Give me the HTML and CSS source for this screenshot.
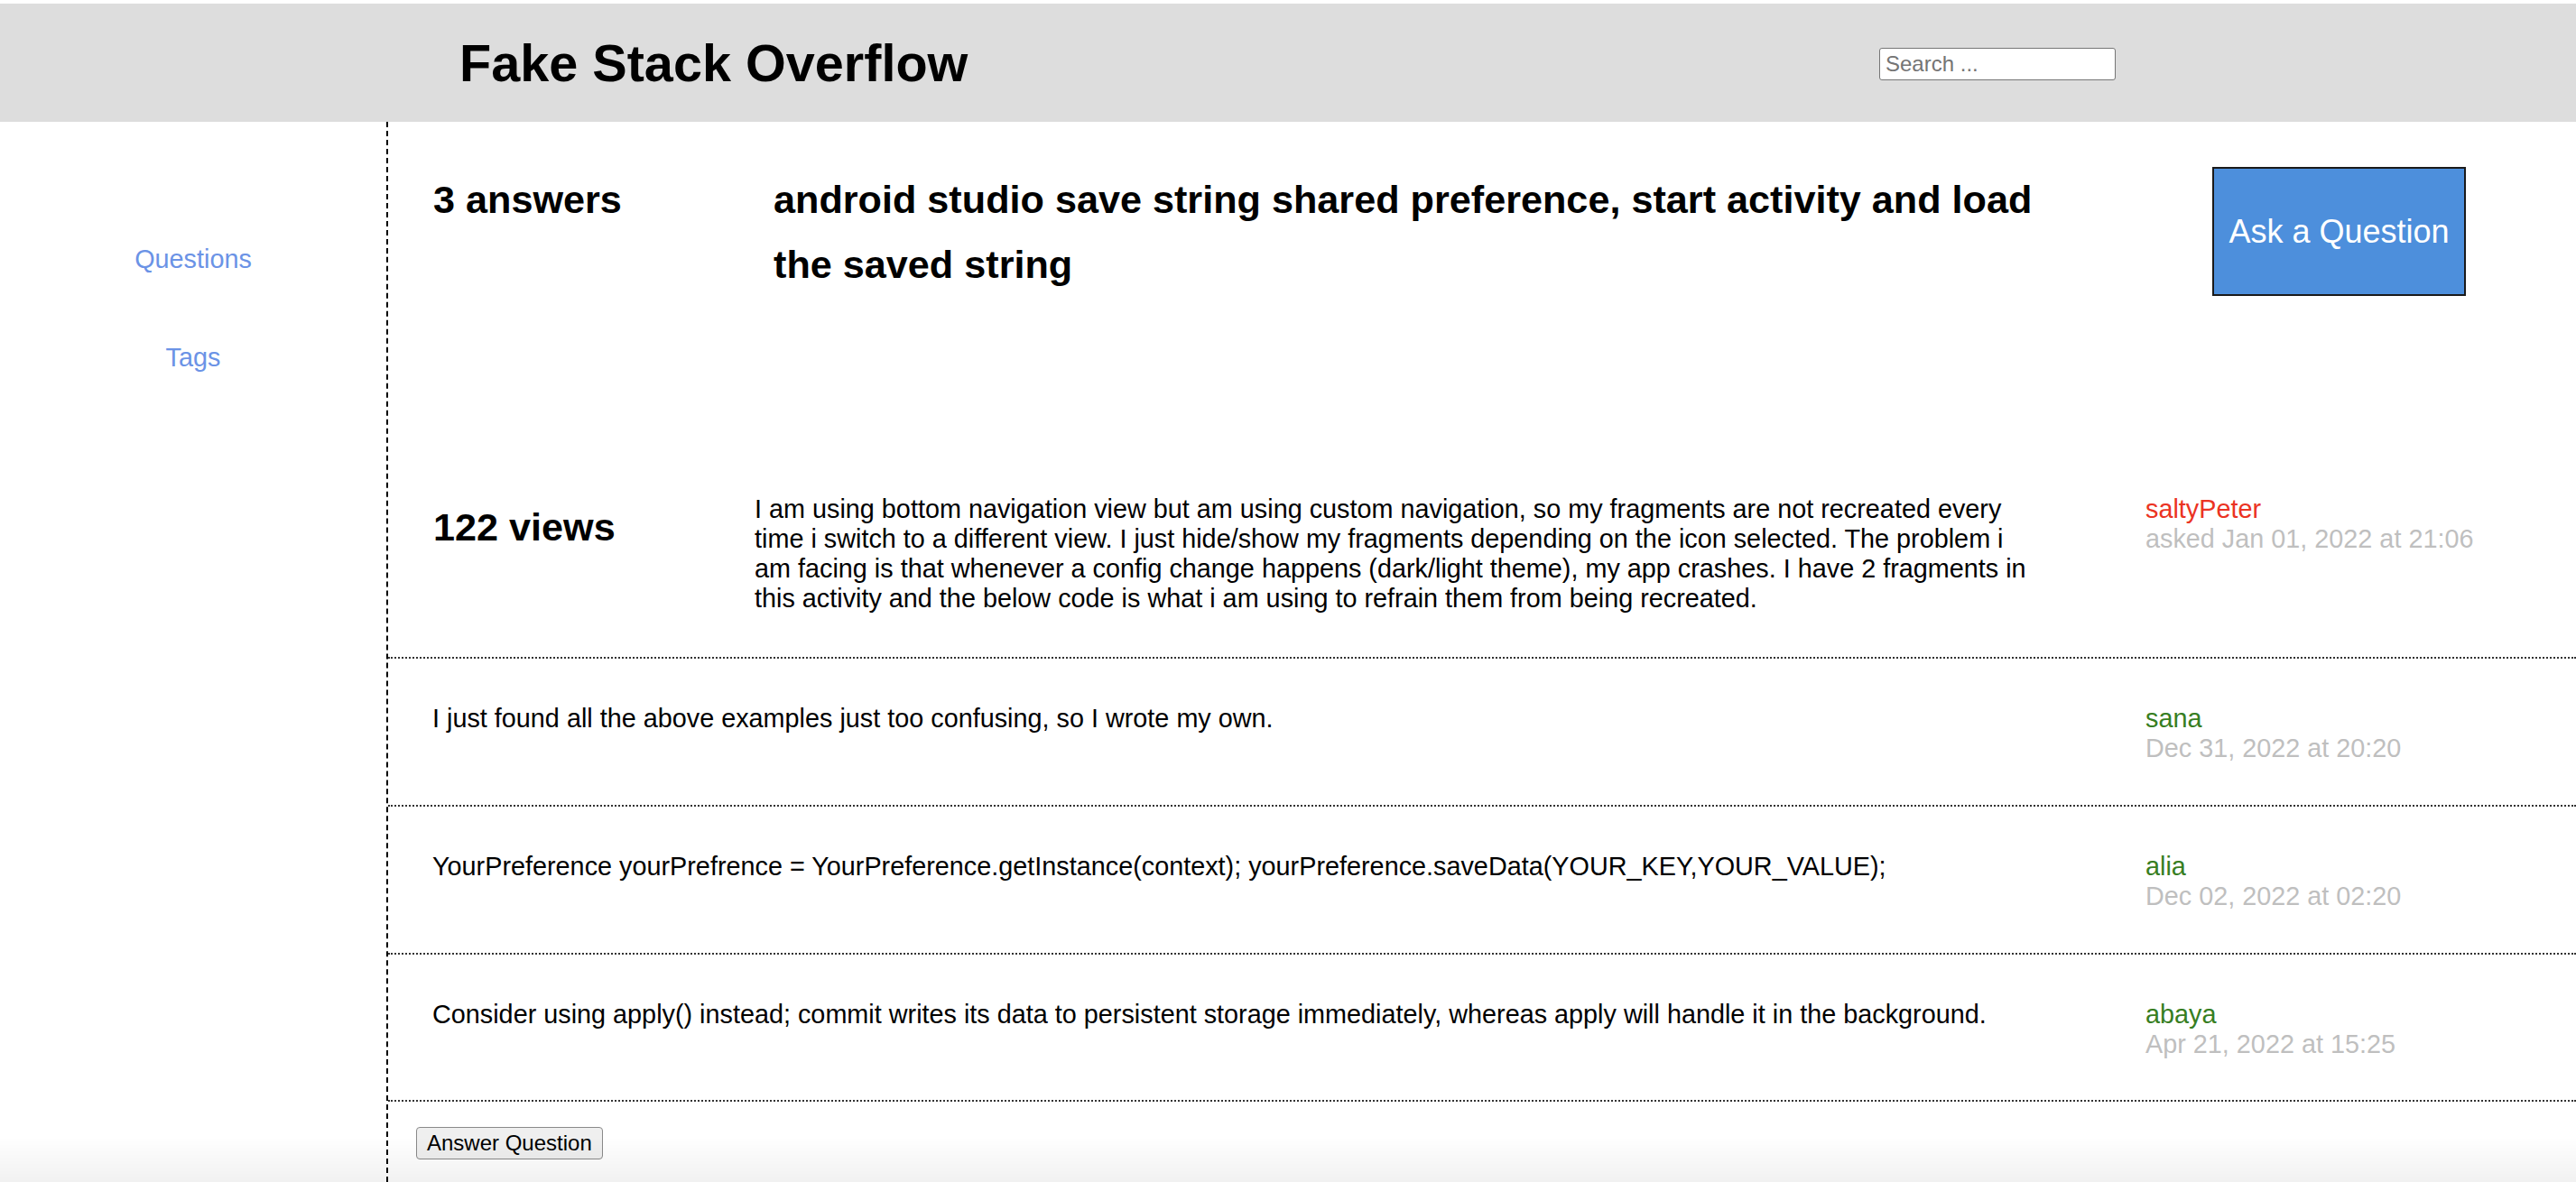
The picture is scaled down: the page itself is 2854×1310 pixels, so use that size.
FILE: index.html
```html
<!DOCTYPE html>
<html lang="en">
<head>
<meta charset="utf-8">
<title>Fake Stack Overflow</title>
<link rel="stylesheet" href="styles.css">
</head>
<body>
<header class="topbar">
  <h1 class="brand">Fake Stack Overflow</h1>
  <input class="search" type="text" placeholder="Search ...">
</header>
<div class="layout">
  <nav class="sidebar">
    <a class="nav-link" href="#">Questions</a>
    <a class="nav-link" href="#">Tags</a>
  </nav>
  <main class="content">
    <section class="q-header">
      <div class="answer-count">3 answers</div>
      <div class="q-title">android studio save string shared preference, start activity and load the saved string</div>
      <button class="ask-btn">Ask a Question</button>
    </section>
    <section class="q-body">
      <div class="views">122 views</div>
      <div class="q-text">I am using bottom navigation view but am using custom navigation, so my fragments are not recreated every time i switch to a different view. I just hide/show my fragments depending on the icon selected. The problem i am facing is that whenever a config change happens (dark/light theme), my app crashes. I have 2 fragments in this activity and the below code is what i am using to refrain them from being recreated.</div>
      <div class="meta">
        <div class="author author-asker">saltyPeter</div>
        <div class="date">asked Jan 01, 2022 at 21:06</div>
      </div>
    </section>
    <div class="answer">
      <div class="answer-text">I just found all the above examples just too confusing, so I wrote my own.</div>
      <div class="meta">
        <div class="author">sana</div>
        <div class="date">Dec 31, 2022 at 20:20</div>
      </div>
    </div>
    <div class="answer">
      <div class="answer-text">YourPreference yourPrefrence = YourPreference.getInstance(context); yourPreference.saveData(YOUR_KEY,YOUR_VALUE);</div>
      <div class="meta">
        <div class="author">alia</div>
        <div class="date">Dec 02, 2022 at 02:20</div>
      </div>
    </div>
    <div class="answer">
      <div class="answer-text">Consider using apply() instead; commit writes its data to persistent storage immediately, whereas apply will handle it in the background.</div>
      <div class="meta">
        <div class="author">abaya</div>
        <div class="date">Apr 21, 2022 at 15:25</div>
      </div>
    </div>
    <div class="answer-actions">
      <button class="answer-btn">Answer Question</button>
    </div>
  </main>
</div>
</body>
</html>
```

FILE: styles.css
```css
* {
  box-sizing: border-box;
}

html, body {
  margin: 0;
  padding: 0;
  background: #ffffff;
}

body {
  font-family: "Liberation Sans", Arial, Helvetica, sans-serif;
  color: #000;
  font-size: 28.8px;
  overflow: hidden;
}

body::after {
  content: "";
  position: fixed;
  left: 0;
  right: 0;
  bottom: 0;
  height: 50px;
  background: linear-gradient(to bottom, rgba(0, 0, 0, 0), rgba(0, 0, 0, 0.055));
  pointer-events: none;
}

/* ---------- header ---------- */
.topbar {
  margin-top: 4px;
  height: 131px;
  background: #dddddd;
  display: flex;
  align-items: center;
  justify-content: space-between;
  padding: 0 510px 0 509px;
}

.brand {
  margin: 0;
  font-size: 57.6px;
  font-weight: bold;
  line-height: normal;
}

.search {
  width: 262px;
  height: 36px;
  margin-top: 2px;
  border: 1px solid #767676;
  border-radius: 3px;
  padding: 0 6px;
  font-family: "Liberation Sans", Arial, sans-serif;
  font-size: 24px;
  background: #fff;
  color: #000;
}

.search::placeholder {
  color: #757575;
}

/* ---------- layout ---------- */
.layout {
  display: flex;
  min-height: calc(100vh - 135px);
}

.sidebar {
  flex: none;
  width: 430px;
  border-right: 2px dashed #000;
  display: flex;
  flex-direction: column;
  align-items: center;
  gap: 76px;
  padding-top: 136px;
}

.nav-link {
  color: #6b93e6;
  text-decoration: none;
  font-size: 28.8px;
  line-height: normal;
}

.content {
  flex: 1;
  min-width: 0;
}

/* ---------- question header ---------- */
.q-header {
  display: flex;
  align-items: flex-start;
  height: 368px;
  padding: 50px 0 0 50px;
}

.answer-count {
  flex: none;
  width: 377px;
  font-size: 43.2px;
  font-weight: bold;
  line-height: 72px;
}

.q-title {
  flex: none;
  width: 1450px;
  font-size: 43.2px;
  font-weight: bold;
  line-height: 72px;
}

.ask-btn {
  flex: none;
  margin-left: 144px;
  width: 281px;
  height: 143px;
  background: #4d8fdc;
  color: #ffffff;
  border: 2px solid #1a1a1a;
  border-radius: 0;
  font-family: "Liberation Sans", Arial, sans-serif;
  font-size: 36px;
  padding: 0;
}

/* ---------- question body ---------- */
.q-body {
  display: flex;
  align-items: flex-start;
  padding: 45px 0 48px 50px;
  border-bottom: 2px dotted #333;
}

.views {
  flex: none;
  width: 356px;
  margin-top: 12px;
  font-size: 43.2px;
  font-weight: bold;
  line-height: normal;
}

.q-text {
  flex: none;
  width: 1420px;
  line-height: normal;
}

.q-body .meta {
  margin-left: 121px;
}

/* ---------- meta ---------- */
.meta {
  flex: none;
  line-height: normal;
}

.author {
  color: #377e22;
}

.author-asker {
  color: #eb3323;
}

.date {
  color: #bfbfbf;
}

/* ---------- answers ---------- */
.answer {
  display: flex;
  align-items: flex-start;
  padding: 50px 0 45.8px 49px;
  border-bottom: 2px dotted #333;
}

.answer-text {
  flex: none;
  width: 1898px;
  line-height: normal;
}

.answer-actions {
  padding: 28px 0 20px 31px;
}

.answer-btn {
  height: 36px;
  padding: 0 11px;
  font-family: "Liberation Sans", Arial, sans-serif;
  font-size: 24px;
  color: #000;
  background: #efefef;
  border: 1px solid #8a8a8a;
  border-radius: 4px;
}
```
